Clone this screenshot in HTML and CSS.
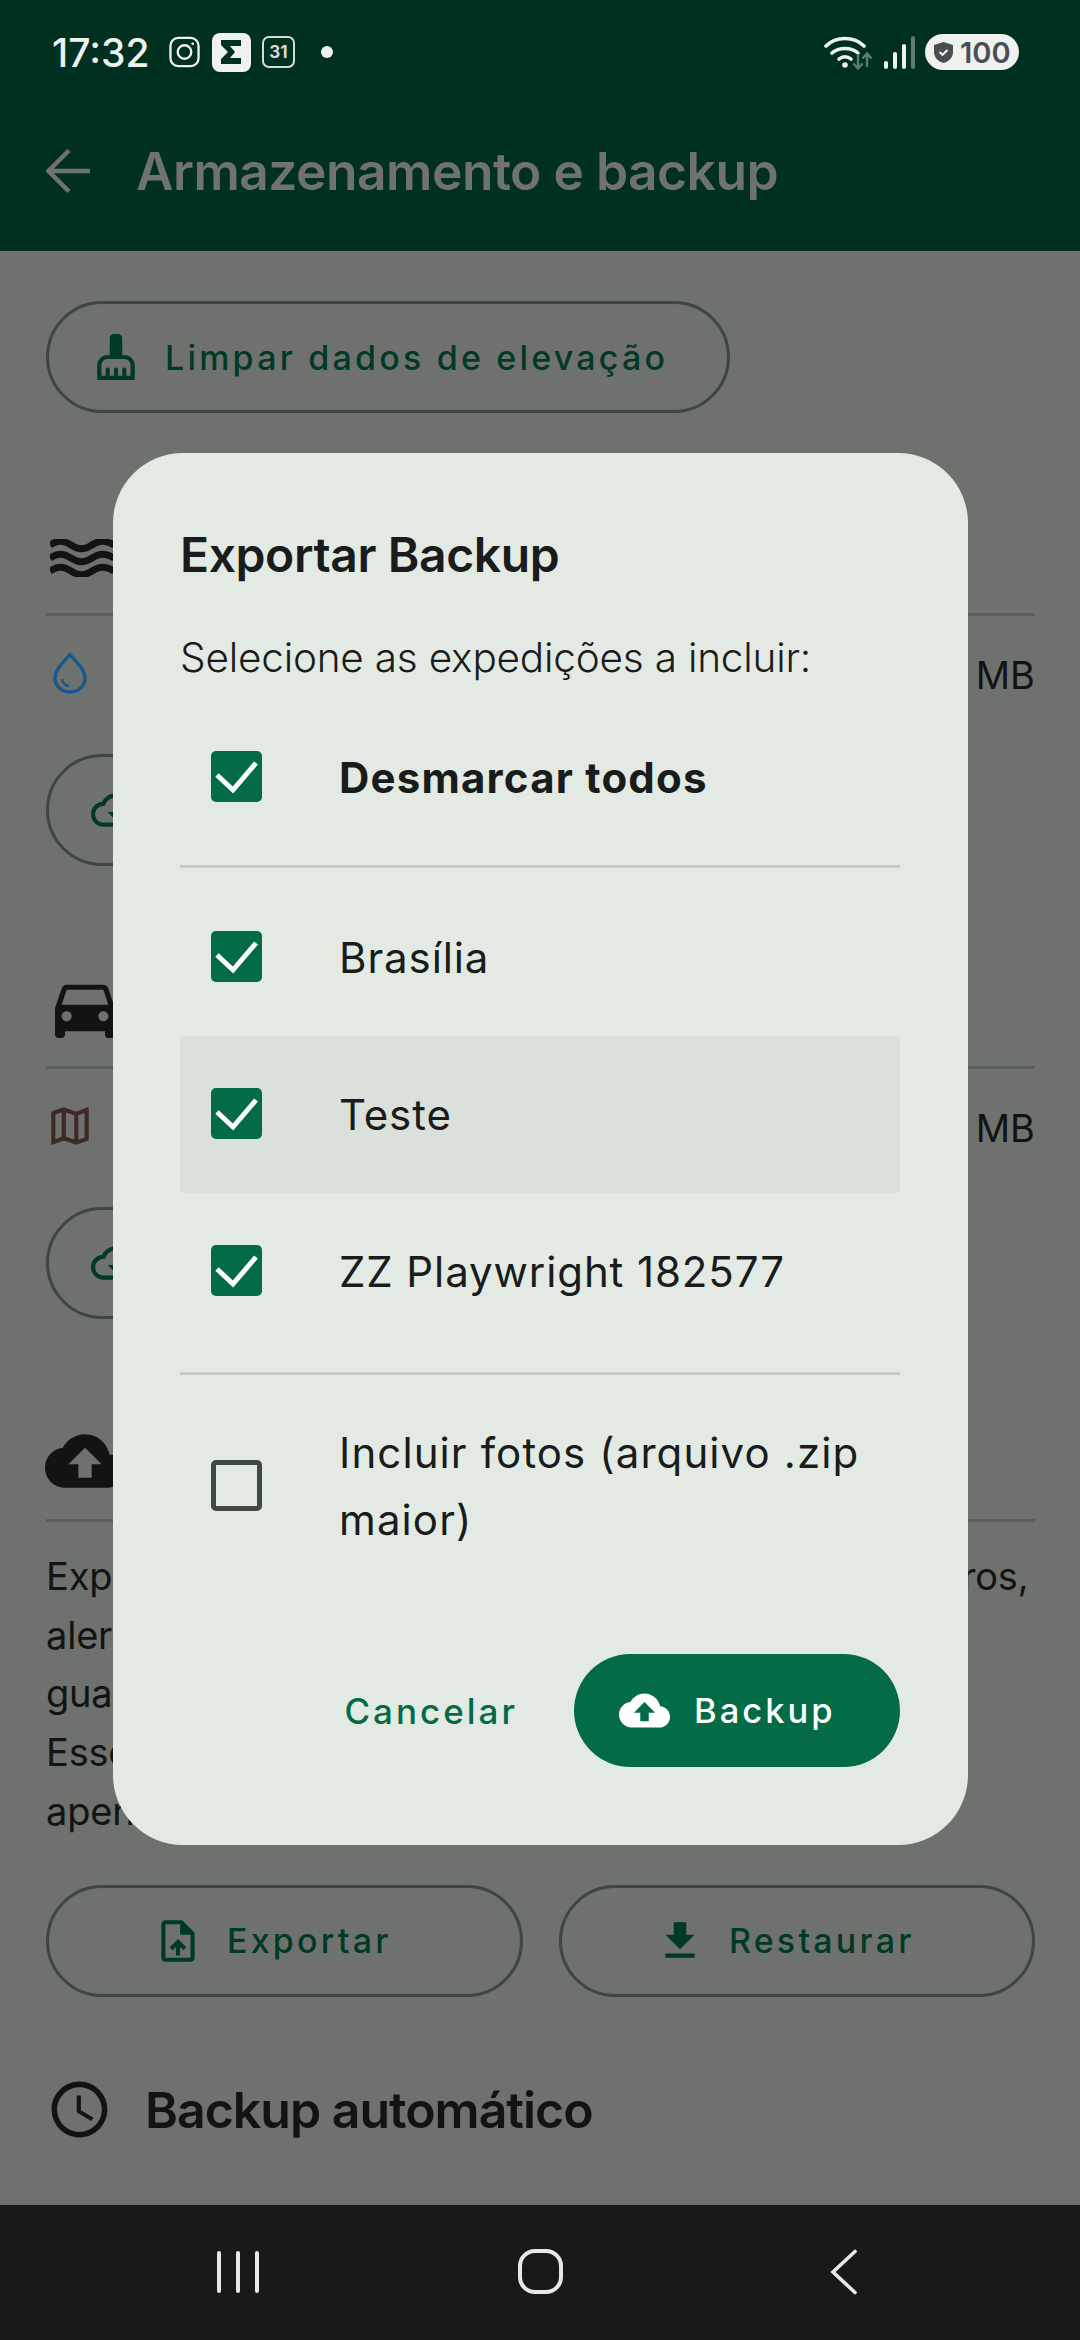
FILE: index.html
```html
<!DOCTYPE html>
<html lang="pt-BR">
<head>
    <meta charset="UTF-8">
    <meta name="viewport" content="width=device-width, initial-scale=1.0">
    <title>Armazenamento e backup</title>
    <link rel="stylesheet" href="styles.css">
</head>
<body>
    <div class="screen">
        <header class="top">
            <div class="status">
                <span class="time">17:32</span>
                <svg class="st-insta" viewBox="0 0 32 32" fill="none" stroke="#eef1ee" stroke-width="2.4">
                    <rect x="1.5" y="1.5" width="29" height="29" rx="8"/>
                    <circle cx="16" cy="16" r="7"/>
                    <circle cx="24.5" cy="7.5" r="1.4" fill="#eef1ee" stroke="none"/>
                </svg>
                <svg class="st-sigma" viewBox="0 0 39 39">
                    <rect width="39" height="39" rx="8" fill="#eef1ee"/>
                    <path d="M9 7h20v6H18l5 6-5 6h11v6H9v-5l7-7-7-7z" fill="#00301f"/>
                </svg>
                <span class="st-cal">31</span>
                <span class="st-dot"></span>
                <span class="st-right">
                    <svg class="st-wifi" viewBox="0 0 48 34" fill="none" stroke="#eef1ee" stroke-linecap="round" stroke-width="3.6">
                        <path d="M2 10C12 0 30 0 40 10"/>
                        <path d="M8 17c7-6 19-6 26 0"/>
                        <path d="M15 23c3.500-3 8.500-3 12 0"/>
                        <circle cx="21" cy="29" r="2.800" fill="#eef1ee" stroke="none"/>
                        <g stroke="#5d7d6e" stroke-width="2.400" stroke-linecap="butt">
                            <path d="M34 18v14M29.500 27.500l4.500 5 4.500-5"/>
                            <path d="M43 31V18M38.500 22.500l4.500-5 4.500 5"/>
                        </g>
                    </svg>
                    <span class="bars">
                        <i class="bar b1"></i><i class="bar b2"></i><i class="bar b3"></i><i class="bar b4"></i>
                    </span>
                    <span class="battery">
                        <svg viewBox="0 0 19 21"><path d="M9.500 0l9.500 3v7c0 5.500-4 9.500-9.500 11C4 19.500 0 15.500 0 10V3z" fill="#4a4d52"/><path d="M5.500 10l3 2.800 5-4.800" fill="none" stroke="#eef1ee" stroke-width="2"/></svg>
                        <span>100</span>
                    </span>
                </span>
            </div>
            <div class="appbar">
                <svg class="back" viewBox="0 0 44 44" fill="none" stroke="#707270" stroke-width="4.500">
                    <path d="M44 22H3M23 1.500L2.500 22 23 42.500"/>
                </svg>
                <h1>Armazenamento e backup</h1>
            </div>
        </header>

        <main class="content">
            <button class="outline wide">
                <svg class="ic" viewBox="0 0 24 24"><path d="M16 11h-1V3c0-1.100-.9-2-2-2h-2c-1.100 0-2 .9-2 2v8H8c-2.760 0-5 2.240-5 5v7h18v-7c0-2.760-2.240-5-5-5zm3 10h-2v-3c0-.55-.45-1-1-1s-1 .45-1 1v3h-2v-3c0-.55-.45-1-1-1s-1 .45-1 1v3H9v-3c0-.55-.45-1-1-1s-1 .45-1 1v3H5v-5c0-1.650 1.350-3 3-3h8c1.650 0 3 1.350 3 3v5z"/></svg>
                Limpar dados de elevação
            </button>

            <section class="section">
                <div class="sec-head">
                    <svg class="waves" viewBox="0 0 64 38" fill="none" stroke="#121413" stroke-width="7">
                        <path d="M0 6c8-5 13-5 21 0s13 5 21 0 13-5 22 0"/>
                        <path d="M0 19c8-5 13-5 21 0s13 5 21 0 13-5 22 0"/>
                        <path d="M0 32c8-5 13-5 21 0s13 5 21 0 13-5 22 0"/>
                    </svg>
                </div>
                <div class="row">
                    <svg class="drop" viewBox="0 0 34 42" fill="none" stroke="#19578f" stroke-width="3.400">
                        <path d="M17 2.500C11 10 2 17 2 26c0 8 6.500 14 15 14s15-6 15-14C32 17 23 10 17 2.500z"/>
                        <path d="M9 27c.5 4 3 6.500 7 7" stroke-width="2.400"/>
                    </svg>
                    <span class="size">MB</span>
                </div>
                <button class="outline wide">
                    <svg class="ic" viewBox="0 0 24 24"><path d="M19.350 10.040C18.670 6.590 15.640 4 12 4 9.110 4 6.600 5.640 5.350 8.040 2.340 8.360 0 10.910 0 14c0 3.310 2.690 6 6 6h13c2.760 0 5-2.240 5-5 0-2.640-2.050-4.780-4.650-4.960zM19 18H6c-2.210 0-4-1.790-4-4 0-2.050 1.530-3.760 3.560-3.970l1.070-.11.5-.95C8.080 7.140 9.940 6 12 6c2.620 0 4.880 1.860 5.390 4.430l.3 1.500 1.530.11c1.560.1 2.780 1.410 2.780 2.960 0 1.650-1.350 3-3 3zm-5.550-8h-2.900v3H8l4 4 4-4h-2.550z"/></svg>
                </button>
            </section>

            <section class="section">
                <div class="sec-head">
                    <svg class="big-ic" viewBox="0 0 24 24"><path d="M18.920 6.010C18.720 5.420 18.160 5 17.500 5h-11c-.66 0-1.210.42-1.420 1.010L3 12v8c0 .55.45 1 1 1h1c.55 0 1-.45 1-1v-1h12v1c0 .55.45 1 1 1h1c.55 0 1-.45 1-1v-8l-2.080-5.990zM6.500 16c-.83 0-1.500-.67-1.500-1.500S5.670 13 6.500 13s1.500.67 1.500 1.500S7.330 16 6.500 16zm11 0c-.83 0-1.500-.67-1.500-1.500s.67-1.500 1.500-1.500 1.500.67 1.500 1.500-.67 1.500-1.500 1.500zM5 11l1.500-4.500h11L19 11H5z"/></svg>
                </div>
                <div class="row">
                    <svg class="map" viewBox="0 0 24 24"><path d="M20.500 3l-.16.03L15 5.100 9 3 3.360 4.900c-.21.07-.36.25-.36.48V20.500c0 .28.22.5.5.5l.16-.03L9 18.900l6 2.100 5.640-1.900c.21-.07.36-.25.36-.48V3.500c0-.28-.22-.5-.5-.5zM10 5.470l4 1.400v11.660l-4-1.400V5.470zm-5 .99l3-1.010v11.700l-3 1.160V6.460zm14 11.080l-3 1.010V6.860l3-1.160v11.840z"/></svg>
                    <span class="size">MB</span>
                </div>
                <button class="outline wide">
                    <svg class="ic" viewBox="0 0 24 24"><path d="M19.350 10.040C18.670 6.590 15.640 4 12 4 9.110 4 6.600 5.640 5.350 8.040 2.340 8.360 0 10.910 0 14c0 3.310 2.690 6 6 6h13c2.760 0 5-2.240 5-5 0-2.640-2.050-4.780-4.650-4.960zM19 18H6c-2.210 0-4-1.790-4-4 0-2.050 1.530-3.760 3.560-3.970l1.070-.11.5-.95C8.080 7.140 9.940 6 12 6c2.620 0 4.880 1.860 5.390 4.430l.3 1.500 1.530.11c1.560.1 2.780 1.410 2.780 2.960 0 1.650-1.350 3-3 3zm-5.550-8h-2.900v3H8l4 4 4-4h-2.550z"/></svg>
                </button>
            </section>

            <section class="section">
                <div class="sec-head">
                    <svg class="big-ic" viewBox="0 0 24 24"><path d="M19.350 10.040C18.670 6.590 15.640 4 12 4 9.110 4 6.600 5.640 5.350 8.040 2.340 8.360 0 10.910 0 14c0 3.310 2.690 6 6 6h13c2.760 0 5-2.240 5-5 0-2.640-2.050-4.780-4.650-4.960zM14 13v4h-4v-4H7l5-5 5 5h-3z"/></svg>
                </div>
                <p class="about">Exporte expedições, gastos, abastecimentos, registros,<br>alertas e ajustes.<br>guarde o arquivo.<br>Esse backup<br>apenas</p>
                <div class="btn-pair">
                    <button class="outline">
                        <svg class="ic" viewBox="0 0 24 24"><path d="M14 2H6c-1.100 0-1.990.9-1.990 2L4 20c0 1.100.89 2 1.990 2H18c1.100 0 2-.9 2-2V8l-6-6zm4 18H6V4h7v5h5v11zM8 15.010l1.410 1.410L11 14.840V19h2v-4.160l1.590 1.590L16 15.010 12.010 11 8 15.010z"/></svg>
                        Exportar
                    </button>
                    <button class="outline">
                        <svg class="ic" viewBox="0 0 24 24"><path d="M19 9h-4V3H9v6H5l7 7 7-7zM5 18v2h14v-2H5z"/></svg>
                        Restaurar
                    </button>
                </div>
            </section>

            <div class="auto-head">
                <svg class="clock" viewBox="0 0 24 24"><path d="M11.990 2C6.470 2 2 6.480 2 12s4.470 10 9.990 10C17.520 22 22 17.520 22 12S17.520 2 11.990 2zM12 20c-4.420 0-8-3.580-8-8s3.580-8 8-8 8 3.580 8 8-3.580 8-8 8zm.5-13H11v6l5.250 3.150.75-1.230-4.500-2.670z"/></svg>
                <h2>Backup automático</h2>
            </div>
        </main>

        <nav class="navbar">
            <span class="nav-recent"><i></i><i></i><i></i></span>
            <span class="nav-home"></span>
            <svg class="nav-back" viewBox="0 0 28 46" fill="none" stroke="#e8e8e8" stroke-width="3.600" stroke-linecap="round">
                <path d="M25 2.500L3 23l22 20.500"/>
            </svg>
        </nav>

        <div class="overlay">
            <div class="dialog">
                <h3>Exportar Backup</h3>
                <p class="hint">Selecione as expedições a incluir:</p>
                <label class="check-row all">
                    <span class="box on"><svg viewBox="0 0 51 51"><path d="M6 24l16 15L45 12"/></svg></span>
                    Desmarcar todos
                </label>
                <hr class="sep first">
                <label class="check-row">
                    <span class="box on"><svg viewBox="0 0 51 51"><path d="M6 24l16 15L45 12"/></svg></span>
                    Brasília
                </label>
                <label class="check-row pressed">
                    <span class="box on"><svg viewBox="0 0 51 51"><path d="M6 24l16 15L45 12"/></svg></span>
                    Teste
                </label>
                <label class="check-row">
                    <span class="box on"><svg viewBox="0 0 51 51"><path d="M6 24l16 15L45 12"/></svg></span>
                    ZZ Playwright 182577
                </label>
                <hr class="sep second">
                <label class="check-row photos">
                    <span class="box"></span>
                    <span>Incluir fotos (arquivo .zip maior)</span>
                </label>
                <div class="actions">
                    <button class="text-btn">Cancelar</button>
                    <button class="fill-btn">
                        <svg viewBox="0 0 24 24"><path d="M19.350 10.040C18.670 6.590 15.640 4 12 4 9.110 4 6.600 5.640 5.350 8.040 2.340 8.360 0 10.910 0 14c0 3.310 2.690 6 6 6h13c2.760 0 5-2.240 5-5 0-2.640-2.050-4.780-4.650-4.960zM14 13v4h-4v-4H7l5-5 5 5h-3z"/></svg>
                        Backup
                    </button>
                </div>
            </div>
        </div>
    </div>
</body>
</html>
```

FILE: styles.css
```css
* {
    margin: 0;
    padding: 0;
    box-sizing: border-box;
}

body {
    font-family: 'Inter', 'Noto Sans', sans-serif;
    background: #6f716e;
}

.screen {
    position: relative;
    width: 1080px;
    height: 2340px;
    display: flex;
    flex-direction: column;
    overflow: hidden;
    background: #6f716e;
}

/* Status bar and app bar */
.top {
    height: 251px;
    flex: none;
    background: #00301f;
}

.status {
    height: 104px;
    display: flex;
    align-items: center;
    padding-left: 52px;
}

.time {
    width: 117px;
    font-size: 39px;
    font-weight: 500;
    color: #eef1ee;
    letter-spacing: 0;
}

.st-insta {
    width: 31px;
    height: 32px;
    flex: none;
}

.st-sigma {
    width: 39px;
    height: 39px;
    margin-left: 12px;
    flex: none;
}

.st-cal {
    width: 33px;
    height: 32px;
    margin-left: 11px;
    border: 2px solid #d5dcd7;
    border-radius: 7px;
    display: flex;
    align-items: center;
    justify-content: center;
    font-size: 17px;
    font-weight: 700;
    color: #d5dcd7;
}

.st-dot {
    width: 12px;
    height: 12px;
    margin-left: 26px;
    border-radius: 50%;
    background: #eef1ee;
}

.st-right {
    margin-left: auto;
    margin-right: 61px;
    display: flex;
    align-items: center;
}

.st-wifi {
    width: 48px;
    height: 34px;
    margin-top: 2px;
}

.bars {
    height: 33px;
    margin-left: 12px;
    display: flex;
    align-items: flex-end;
    gap: 4.500px;
}

.bar {
    width: 4.500px;
    border-radius: 2px;
    background: #eef1ee;
}

.b1 { height: 8px; }
.b2 { height: 17px; }
.b3 { height: 25px; }
.b4 { height: 33px; background: #5d7d6e; }

.battery {
    width: 94px;
    height: 36px;
    margin-left: 10px;
    padding-left: 9px;
    display: flex;
    align-items: center;
    gap: 7px;
    border-radius: 18px;
    background: #eef1ee;
    font-size: 29px;
    font-weight: 600;
    color: #4a4d52;
}

.battery svg {
    width: 19px;
    height: 21px;
}

.appbar {
    height: 137px;
    padding-left: 46px;
    padding-bottom: 3px;
    display: flex;
    align-items: center;
    gap: 46px;
}

.back {
    width: 44px;
    height: 44px;
    flex: none;
}

h1 {
    font-size: 51.500px;
    font-weight: 600;
    color: #707270;
    letter-spacing: -0.5px;
    white-space: nowrap;
}

/* Page behind the dialog */
.content {
    flex: 1;
    min-height: 0;
    overflow: hidden;
    padding: 50px 45px 0 46px;
}

.outline {
    height: 112px;
    padding-right: 24px;
    display: flex;
    align-items: center;
    justify-content: center;
    gap: 24px;
    border: 3px solid #3f4541;
    border-radius: 56px;
    background: transparent;
    font-family: inherit;
    font-size: 34px;
    font-weight: 500;
    letter-spacing: 3.200px;
    color: #003a25;
}

.outline.wide {
    width: 684px;
    padding-left: 42px;
    padding-right: 0;
    justify-content: flex-start;
}

.ic {
    width: 50px;
    height: 50px;
    flex: none;
    fill: #003a25;
}

.section {
    margin-top: 89px;
}

.sec-head {
    height: 114px;
    display: flex;
    align-items: center;
    border-bottom: 3px solid #595e5a;
}

.waves {
    width: 64px;
    height: 38px;
    margin-left: 4px;
}

.big-ic {
    width: 80px;
    height: 80px;
    margin-left: -1px;
    margin-top: -6px;
    fill: #121413;
}

.row {
    height: 118px;
    margin-bottom: 20px;
    display: flex;
    align-items: center;
    justify-content: space-between;
}

.drop {
    width: 34px;
    height: 42px;
    margin-left: 7px;
    margin-top: -4px;
}

.map {
    width: 50px;
    height: 50px;
    margin-left: -1px;
    margin-top: -4px;
    fill: #3e2a22;
}

.size {
    font-size: 38px;
    color: #121413;
}

.about {
    margin-top: 25px;
    font-size: 38px;
    line-height: 58.700px;
    letter-spacing: -0.2px;
    color: #121413;
    white-space: nowrap;
}

.btn-pair {
    margin-top: 44px;
    display: flex;
    gap: 36px;
}

.btn-pair .outline {
    width: 477px;
}

.auto-head {
    height: 112px;
    margin-top: 57px;
    display: flex;
    align-items: center;
    gap: 32px;
}

.clock {
    width: 67px;
    height: 67px;
    flex: none;
    fill: #121413;
}

h2 {
    font-size: 50px;
    font-weight: 600;
    letter-spacing: -1px;
    color: #121413;
}

/* Navigation bar */
.navbar {
    height: 135px;
    flex: none;
    background: #181a19;
    display: flex;
    align-items: center;
    padding-bottom: 2px;
}

.nav-recent {
    width: 42px;
    margin-left: 217px;
    display: flex;
    justify-content: space-between;
}

.nav-recent i {
    width: 4px;
    height: 42px;
    border-radius: 2px;
    background: #e8e8e8;
}

.nav-home {
    width: 45px;
    height: 45px;
    margin-left: 259px;
    border: 4px solid #e8e8e8;
    border-radius: 17px;
}

.nav-back {
    width: 28px;
    height: 46px;
    margin-left: 267px;
}

/* Dialog */
.overlay {
    position: absolute;
    top: 453px;
    left: 113px;
}

.dialog {
    width: 855px;
    height: 1392px;
    padding: 67px 68px 0 67px;
    border-radius: 70px;
    background: #e3eae3;
    color: #191c1a;
}

h3 {
    height: 70px;
    line-height: 70px;
    font-size: 48px;
    font-weight: 600;
    letter-spacing: -0.4px;
}

.hint {
    height: 60px;
    margin-top: 38px;
    line-height: 60px;
    font-size: 40.500px;
    font-weight: 300;
    letter-spacing: -0.2px;
}

.check-row {
    height: 157px;
    display: flex;
    align-items: center;
    gap: 77px;
    padding-left: 31px;
    font-size: 42px;
    letter-spacing: 0.9px;
}

.check-row.all {
    margin-top: 11px;
    font-weight: 700;
    letter-spacing: 1.2px;
}

.pressed {
    background: #dae1da;
}

.box {
    width: 51px;
    height: 51px;
    margin-bottom: 2px;
    flex: none;
    border: 5px solid #3f4a42;
    border-radius: 5px;
}

.box.on {
    border: none;
    background: #036b46;
}

.box svg {
    display: block;
    width: 51px;
    height: 51px;
    fill: none;
    stroke: #fff;
    stroke-width: 5px;
}

.sep {
    border: none;
    height: 3px;
    background: #c3ccc5;
}

.sep.first {
    margin: 9px 0 11px;
}

.sep.second {
    margin-top: 22px;
}

.check-row.photos {
    height: 134px;
    margin-top: 44px;
    line-height: 67px;
    letter-spacing: 1.1px;
}

.actions {
    margin-top: 101px;
    display: flex;
    justify-content: flex-end;
    align-items: center;
    gap: 56px;
}

.text-btn {
    border: none;
    background: none;
    font-family: inherit;
    font-size: 35px;
    font-weight: 500;
    letter-spacing: 3px;
    color: #036b46;
}

.fill-btn {
    width: 326px;
    height: 113px;
    padding-left: 45px;
    display: flex;
    align-items: center;
    gap: 24px;
    border: none;
    border-radius: 57px;
    background: #036b46;
    font-family: inherit;
    font-size: 34.500px;
    font-weight: 500;
    letter-spacing: 3px;
    color: #fff;
}

.fill-btn svg {
    width: 51px;
    height: 51px;
    flex: none;
    fill: #fff;
}
```
